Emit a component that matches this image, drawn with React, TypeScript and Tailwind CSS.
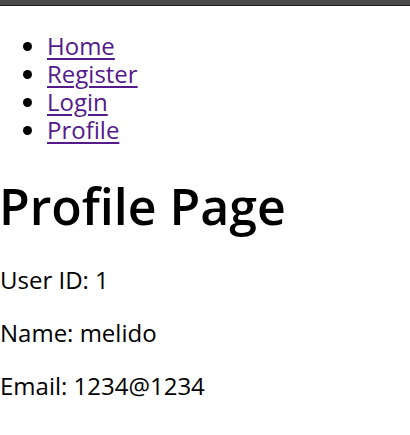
export default function App() {
  const links = ['Home', 'Register', 'Login', 'Profile'];

  return (
    <div className="min-h-[435px] bg-white text-black" style={{ fontFamily: '"Open Sans", sans-serif' }}>
      <div className="h-[6px] border-b border-[#1e1e1e] bg-[#4a4a4a]"></div>

      <ul className="mt-[26px] list-disc pl-[47px] text-[24px] leading-[28px]">
        {links.map((label) => (
          <li key={label}>
            <a href="#" className="text-[#551a8b] underline decoration-[2px] underline-offset-[3px]">
              {label}
            </a>
          </li>
        ))}
      </ul>

      <h1 className="mt-[32px] -ml-[1px] text-[50px] font-semibold leading-[60px]">Profile Page</h1>

      <div className="mt-[30px] flex flex-col gap-[25px] text-[24px] leading-[28px]">
        <p>User ID: 1</p>
        <p>Name: melido</p>
        <p>Email: 1234@1234</p>
      </div>
    </div>
  );
}
